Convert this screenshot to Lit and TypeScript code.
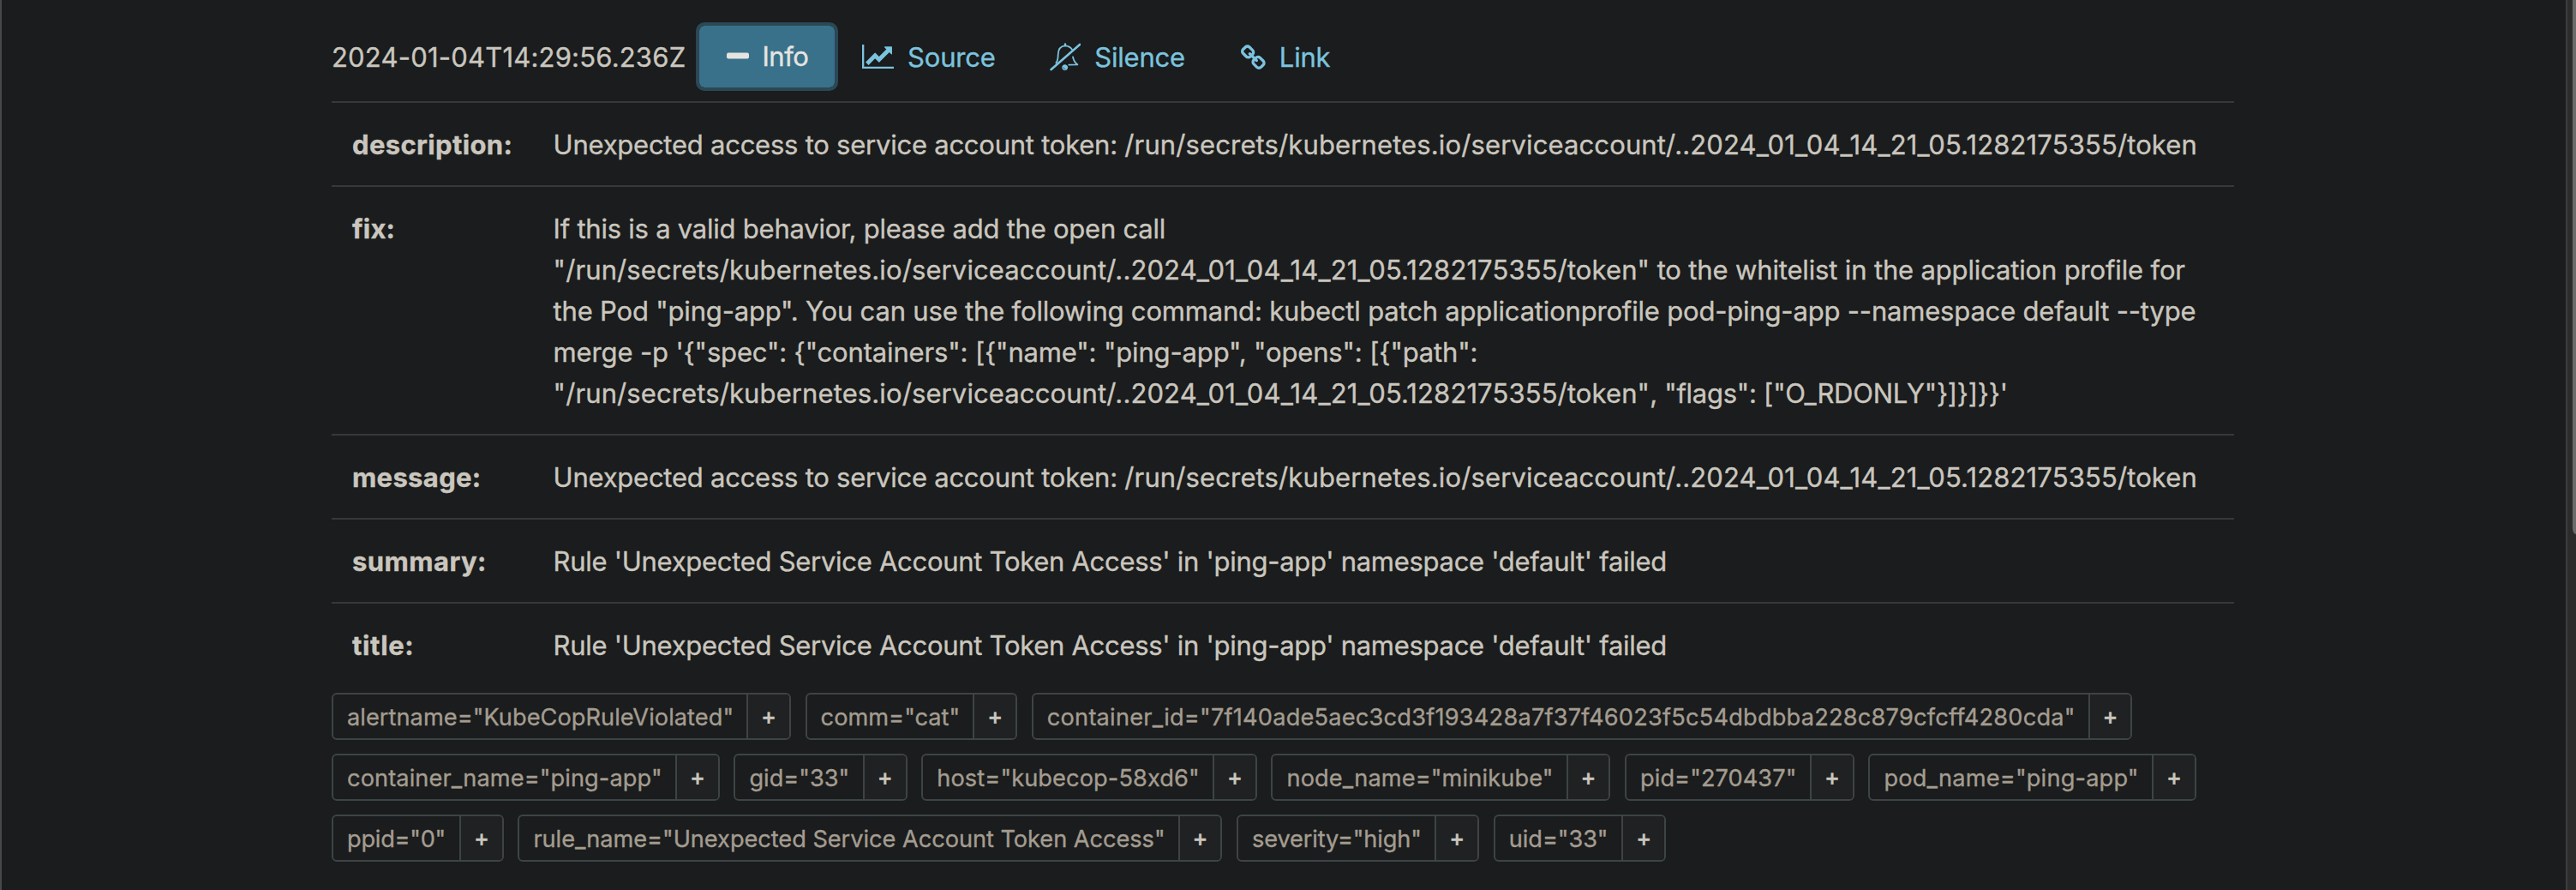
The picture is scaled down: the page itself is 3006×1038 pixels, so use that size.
import { LitElement, html, css, svg } from "lit";
import { customElement, property } from "lit/decorators.js";
import { classMap } from "lit/directives/class-map.js";
import { styleMap } from "lit/directives/style-map.js";

/** A run of text and its letter spacing in pixels. */
type Run = [text: string, tracking: number];

const tokenPath =
  "/run/secrets/kubernetes.io/serviceaccount/..2024_01_04_14_21_05.1282175355/token";

const accessLine: Run[] = [
  ["Unexpected access to service account token: ", -0.24],
  [tokenPath, 0.125],
];

const ruleLine: Run[] = [
  ["Rule 'Unexpected Service Account Token Access' in 'ping-app' namespace 'default' failed", -0.285],
];

const annotations: { name: Run; lines: Run[][] }[] = [
  { name: ["description:", 0.36], lines: [accessLine] },
  {
    name: ["fix:", 0.2],
    lines: [
      [["If this is a valid behavior, please add the open call", -0.235]],
      [
        [`"${tokenPath}"`, 0.11],
        [" to the whitelist in the application profile for", -0.155],
      ],
      [
        [
          'the Pod "ping-app". You can use the following command: kubectl patch applicationprofile pod-ping-app --namespace default --type',
          -0.185,
        ],
      ],
      [[`merge -p '{"spec": {"containers": [{"name": "ping-app", "opens": [{"path":`, -0.15]],
      [
        [`"${tokenPath}"`, 0.11],
        [`, "flags": ["O_RDONLY"}]}]}}'`, -0.27],
      ],
    ],
  },
  { name: ["message:", 0.33], lines: [accessLine] },
  { name: ["summary:", 0.43], lines: [ruleLine] },
  { name: ["title:", 0.65], lines: [ruleLine] },
];

const labels: { text: string; width: number; tracking: number }[] = [
  { text: 'alertname="KubeCopRuleViolated"', width: 450.2, tracking: 0.05 },
  { text: 'comm="cat"', width: 161.9, tracking: 0.02 },
  {
    text: 'container_id="7f140ade5aec3cd3f193428a7f37f46023f5c54dbdbba228c879cfcff4280cda"',
    width: 1198.7,
    tracking: 0.21,
  },
  { text: 'container_name="ping-app"', width: 367, tracking: 0.1 },
  { text: 'gid="33"', width: 116.5, tracking: 0 },
  { text: 'host="kubecop-58xd6"', width: 305.8, tracking: 0.1 },
  { text: 'node_name="minikube"', width: 310.2, tracking: 0.12 },
  { text: 'pid="270437"', width: 182, tracking: 0.06 },
  { text: 'pod_name="ping-app"', width: 296.6, tracking: 0.18 },
  { text: 'ppid="0"', width: 115, tracking: -0.25 },
  { text: 'rule_name="Unexpected Service Account Token Access"', width: 736.3, tracking: -0.04 },
  { text: 'severity="high"', width: 197.4, tracking: -0.15 },
  { text: 'uid="33"', width: 115.6, tracking: -0.08 },
];

const icons = {
  minus: {
    box: "0 0 26 8",
    width: 26,
    height: 8,
    body: svg`<rect x="0" y="0.4" width="26" height="7.2" rx="2" fill="currentColor"/>`,
  },
  chart: {
    box: "0 0 2048 1536",
    width: 37.3,
    height: 28,
    body: svg`<path fill="currentColor" d="M2048 1408v128h-2048v-1536h128v1408h1920zM1920 160v435q0 21-19.5 29.5t-35.5-7.500l-121-121-633 633q-10 10-23 10t-23-10l-233-233-416 416-192-192 585-585q10-10 23-10t23 10l233 233 464-464-121-121q-16-16-7.500-35.500t29.500-19.500h435q14 0 23 9t9 23z"/>`,
  },
  bellSlash: {
    box: "17 28 108 102",
    width: 36,
    height: 34,
    body: svg`<g fill="none" stroke="currentColor" stroke-width="5.500" stroke-linecap="round" stroke-linejoin="round">
      <path d="M39 101 Q46 93 46 74 C46 54 52 42 71 41 Q87 42 95 54"/>
      <path d="M98 80 Q101 97 114 107 L84 108"/>
      <path d="M22 124 L122 37" stroke-width="8"/>
      <path d="M71 35 V39" stroke-width="7"/>
      <circle cx="70" cy="117" r="9" fill="currentColor" stroke-width="3"/>
      <path d="M64 117 Q65 123 71 123" stroke="#1a1c1d" stroke-width="1.600"/></g>`,
  },
  link: {
    box: "16 0 1648 1648",
    width: 29,
    height: 29,
    body: svg`<path fill="currentColor" d="M1456 1216q0-40-28-68l-208-208q-28-28-68-28-42 0-72 32 3 3 19 18.500t21.500 21.500 15 19 13 25.500 3.500 27.500q0 40-28 68t-68 28q-15 0-27.500-3.500t-25.500-13-19-15-21.500-21.500-18.500-19q-33 31-33 73 0 40 28 68l206 207q27 27 68 27 40 0 68-26l147-146q28-28 28-67zM753 511q0-40-28-68l-206-207q-28-28-68-28-39 0-68 27l-147 146q-28 28-28 67 0 40 28 68l208 208q27 27 68 27 42 0 72-31-3-3-19-18.500t-21.500-21.500-15-19-13-25.500-3.500-27.500q0-40 28-68t68-28q15 0 27.500 3.500t25.500 13 19 15 21.500 21.500 18.500 19q33-31 33-73zM1648 1216q0 120-85 203l-147 146q-83 83-203 83-121 0-204-85l-206-207q-83-83-83-203 0-123 88-209l-88-88q-86 88-208 88-120 0-204-84l-208-208q-84-84-84-204t85-203l147-146q83-83 203-83 121 0 204 85l206 207q83 83 83 203 0 123-88 209l88 88q86-88 208-88 120 0 204 84l208 208q84 84 84 204z"/>`,
  },
};

@customElement("alert-action")
class AlertAction extends LitElement {
  static styles = css`
    :host {
      display: block;
    }
    .button {
      display: flex;
      align-items: center;
      gap: 16px;
      box-sizing: border-box;
      height: 80px;
      margin: 0;
      padding: 0 26.500px 0 27px;
      border: 0;
      background: none;
      color: #7bc3de;
      font: 400 31px/48px Inter, "Liberation Sans", sans-serif;
      letter-spacing: -0.2px;
      white-space: nowrap;
      -webkit-text-stroke: 0.35px currentColor;
    }
    .active {
      gap: 15.500px;
      padding: 0 31px 0 32px;
      border: 4px solid #2b4855;
      border-radius: 10px;
      background: #39718b;
      background-clip: padding-box;
      color: #e6e4e0;
      letter-spacing: -0.5px;
    }
    .icon {
      display: block;
      flex: none;
    }
    .text {
      margin-top: 1px;
    }
    .active .icon {
      margin-top: -3px;
    }
    .active .text {
      margin-top: -1px;
    }
  `;

  @property() icon: keyof typeof icons = "minus";
  @property({ type: Boolean }) active = false;
  @property() label = "";

  render() {
    const i = icons[this.icon];
    return html`<button class=${classMap({ button: true, active: this.active })}>
      <svg class="icon" width=${i.width} height=${i.height} viewBox=${i.box} aria-hidden="true">${i.body}</svg>
      <span class="text">${this.label}</span>
    </button>`;
  }
}

@customElement("app-root")
class AppRoot extends LitElement {
  static styles = css`
    :host {
      display: block;
      color: #cac6be;
      font: 400 31px/48px Inter, "Liberation Sans", sans-serif;
      white-space: nowrap;
      -webkit-text-stroke: 0.35px currentColor;
    }
    .page {
      display: flex;
      box-sizing: border-box;
      height: 1038px;
      overflow: hidden;
      border-left: 2px solid #47494a;
      background: #1a1c1d;
    }
    .main {
      flex: 1;
      min-width: 0;
      padding: 26px 387px 0 385px;
    }
    .header {
      display: flex;
      align-items: center;
      height: 80px;
      margin-bottom: 12px;
    }
    .time {
      width: 425px;
      padding-top: 1px;
      letter-spacing: 0.2px;
    }
    .source {
      width: 219.500px;
      margin-left: 0.500px;
    }
    .silence {
      width: 222.500px;
    }
    .row {
      display: grid;
      grid-template-columns: 234.600px 1fr;
      padding: 24.500px 0 23.500px 24px;
      border-top: 2px solid #363839;
    }
    .name {
      font-weight: 700;
    }
    .line {
      white-space: pre;
    }
    .labels {
      display: flex;
      flex-wrap: wrap;
      gap: 16px 16.600px;
      margin-top: 8px;
    }
    .label {
      display: flex;
      box-sizing: border-box;
      height: 55px;
      border: 2px solid #3d4445;
      border-radius: 6px;
      color: #a49c90;
      font-size: 27.200px;
      line-height: 53px;
    }
    .value {
      padding: 0 16px;
    }
    .add {
      box-sizing: border-box;
      width: 49.800px;
      margin: 0;
      padding: 0 0 1px;
      border: 0;
      border-left: 2px solid #3d4445;
      border-radius: 0 4px 4px 0;
      background: #1f2122;
      color: #cac6be;
      font: 500 27px/49px Inter, "Liberation Sans", sans-serif;
      text-align: center;
    }
    .track {
      flex: none;
      display: flex;
      justify-content: flex-end;
      box-sizing: border-box;
      width: 12px;
      border-left: 2px solid #3e3e3e;
      background: #2c2c2c;
    }
    .thumb {
      width: 4px;
      height: 623px;
      border-bottom-left-radius: 4px 7px;
      background: #6b6b6b;
    }
  `;

  private run([text, tracking]: Run) {
    return html`<span style=${styleMap({ letterSpacing: `${tracking}px` })}>${text}</span>`;
  }

  render() {
    return html`<div class="page">
      <main class="main">
        <header class="header">
          <span class="time">2024-01-04T14:29:56.236Z</span>
          <alert-action icon="minus" label="Info" active></alert-action>
          <alert-action class="source" icon="chart" label="Source"></alert-action>
          <alert-action class="silence" icon="bellSlash" label="Silence"></alert-action>
          <alert-action icon="link" label="Link"></alert-action>
        </header>
        <section>
          ${annotations.map(
            (a) => html`<div class="row">
              <div class="name">${this.run(a.name)}</div>
              <div>${a.lines.map((line) => html`<div class="line">${line.map((r) => this.run(r))}</div>`)}</div>
            </div>`,
          )}
        </section>
        <section class="labels">
          ${labels.map(
            (l) => html`<div class="label">
              <span class="value" style=${styleMap({ width: `${l.width}px`, letterSpacing: `${l.tracking}px` })}>${l.text}</span>
              <button class="add">+</button>
            </div>`,
          )}
        </section>
      </main>
      <div class="track"><div class="thumb"></div></div>
    </div>`;
  }
}
